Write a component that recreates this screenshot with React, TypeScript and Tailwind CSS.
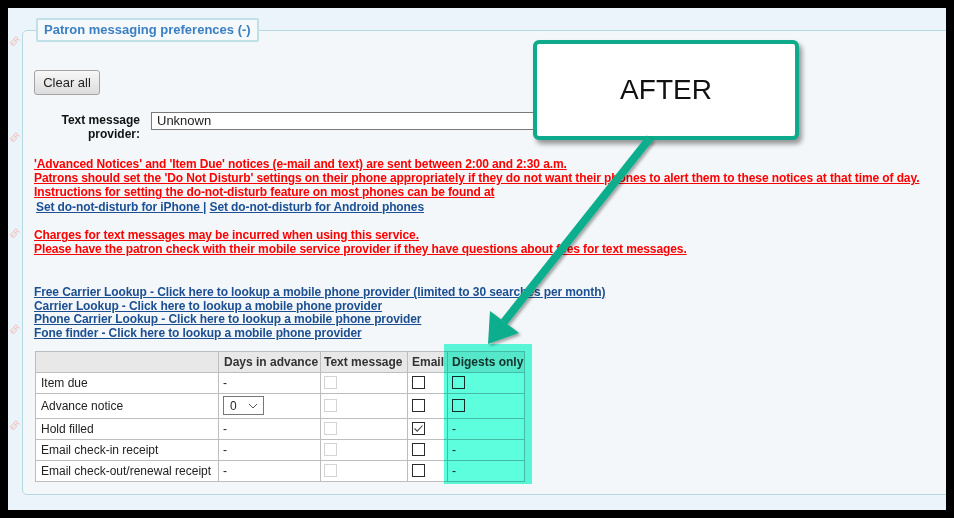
import React from "react";

type Row = {
  name: string;
  days: "-" | "select";
  emailChecked?: boolean;
  digest: "box" | "-";
  h: string;
};

const rows: Row[] = [
  { name: "Item due", days: "-", digest: "box", h: "h-[21px]" },
  { name: "Advance notice", days: "select", digest: "box", h: "h-[25px]" },
  { name: "Hold filled", days: "-", emailChecked: true, digest: "-", h: "h-[21px]" },
  { name: "Email check-in receipt", days: "-", digest: "-", h: "h-[21px]" },
  { name: "Email check-out/renewal receipt", days: "-", digest: "-", h: "h-[21px]" },
];

function Box({ disabled, checked }: { disabled?: boolean; checked?: boolean }) {
  return (
    <span
      className={`flex h-[13px] w-[13px] items-center justify-center border bg-white ${
        disabled ? "border-[#d4d4d4]" : "border-[#2b2b2b]"
      }`}
    >
      {checked && (
        <svg viewBox="0 0 11 11" className="h-[11px] w-[11px]">
          <path d="M1.5 5.5 L4.2 8.2 L9.5 2.5" fill="none" stroke="#444" strokeWidth="1.1" />
        </svg>
      )}
    </span>
  );
}

function Watermark() {
  return (
    <div className="flex w-[14px] shrink-0 flex-col overflow-hidden pt-[30px]">
      {[0, 1, 2, 3, 4].map((i) => (
        <div key={i} className="flex h-[96px] shrink-0 items-start justify-center">
          <span className="block -rotate-45 text-[8px] font-bold leading-none tracking-[-0.5px] text-[#f3c9c9]">
            ER
          </span>
        </div>
      ))}
    </div>
  );
}

export default function App() {
  return (
    <div className="h-[518px] w-[954px] bg-black p-2 font-['Liberation_Sans',Arial,sans-serif] text-[12px] text-[#222]">
      <div className="relative flex h-full w-full overflow-hidden bg-[#eaf4fa]">
        <Watermark />
        <fieldset className="mt-[10px] h-[477px] w-[940px] shrink-0 self-start rounded-[5px] border border-[#b3d9e1] bg-[#f4f7f9] pl-[11px]">
          <legend className="ml-[2px] flex h-[24px] items-center rounded-[2px] border-2 border-[#bfe0e6] bg-[#f6f9fb] px-[6px] text-[13px] font-bold text-[#3b7fc1]">
            Patron messaging preferences (-)
          </legend>

          <div className="mt-[28px]">
            <button className="flex h-[25px] w-[66px] items-center justify-center rounded-[3px] border border-[#a3a3a3] bg-gradient-to-b from-[#f7f7f7] to-[#dddddd] text-[13px] text-[#222]">
              Clear all
            </button>
          </div>

          <div className="mt-[17px] flex items-start">
            <div className="w-[106px] pt-px text-right text-[12px] font-bold leading-[14px] text-[#111]">
              Text message
              <br />
              provider:
            </div>
            <div className="ml-[11px] flex h-[18px] w-[420px] items-center border border-[#7a7a7a] bg-white pl-[5px] text-[13px] text-[#222]">
              Unknown
            </div>
          </div>

          <div className="mt-[16px] text-[12px] font-bold leading-[14px] tracking-[-0.1px] text-[#ff0000]">
            <div className="underline">
              'Advanced Notices' and 'Item Due' notices (e-mail and text) are sent between 2:00 and 2:30 a.m.
            </div>
            <div className="underline">
              Patrons should set the 'Do Not Disturb' settings on their phone appropriately if they do not want their
              phones to alert them to these notices at that time of day.
            </div>
            <div className="underline">
              Instructions for setting the do-not-disturb feature on most phones can be found at
            </div>
            <div className="pt-px pl-[2px] text-[#1c5096]">
              <span className="underline">Set do-not-disturb for iPhone |</span>{" "}
              <span className="underline">Set do-not-disturb for Android phones</span>
            </div>
            <div className="mt-[14px] underline">Charges for text messages may be incurred when using this service.</div>
            <div className="underline">
              Please have the patron check with their mobile service provider if they have questions about fees for
              text messages.
            </div>
          </div>

          <div className="mt-[30px] text-[12px] font-bold leading-[13.7px] tracking-[-0.1px] text-[#1c4f92]">
            <div className="underline">
              Free Carrier Lookup - Click here to lookup a mobile phone provider (limited to 30 searches per month)
            </div>
            <div className="underline">Carrier Lookup - Click here to lookup a mobile phone provider</div>
            <div className="underline">Phone Carrier Lookup - Click here to lookup a mobile phone provider</div>
            <div className="underline">Fone finder - Click here to lookup a mobile phone provider</div>
          </div>

          <div className="relative ml-px mt-[10px] w-[489px]">
            <table className="w-[489px] table-fixed border-collapse text-[12px] text-[#222]">
              <thead>
                <tr className="h-[21px] bg-[#e8e8e8] text-left whitespace-nowrap">
                  <th className="w-[183px] border border-[#bdbdbd] pl-[5px]"></th>
                  <th className="w-[102px] border border-[#bdbdbd] pl-[5px] font-bold text-[#333]">Days in advance</th>
                  <th className="w-[87px] border border-[#bdbdbd] pl-[3px] font-bold text-[#333]">Text message</th>
                  <th className="w-[40px] border border-[#bdbdbd] pl-[4px] font-bold text-[#333]">Email</th>
                  <th className="w-[77px] border border-[#bdbdbd] pl-[4px] font-bold text-[#333]">Digests only</th>
                </tr>
              </thead>
              <tbody>
                {rows.map((r) => (
                  <tr key={r.name} className={`${r.h} bg-white whitespace-nowrap`}>
                    <td className="border border-[#bdbdbd] pl-[5px]">{r.name}</td>
                    <td className="border border-[#bdbdbd] pl-[4px]">
                      {r.days === "-" ? (
                        "-"
                      ) : (
                        <div className="flex h-[19px] w-[41px] items-center justify-between border border-[#777] bg-white pl-[6px] pr-[5px]">
                          <span>0</span>
                          <svg viewBox="0 0 10 6" className="h-[6px] w-[10px]">
                            <path d="M1 1 L5 5 L9 1" fill="none" stroke="#555" strokeWidth="1" />
                          </svg>
                        </div>
                      )}
                    </td>
                    <td className="border border-[#bdbdbd] pl-[3px]">
                      <Box disabled />
                    </td>
                    <td className="border border-[#bdbdbd] pl-[4px]">
                      <Box checked={r.emailChecked} />
                    </td>
                    <td className="border border-[#bdbdbd] pl-[4px]">{r.digest === "box" ? <Box /> : "-"}</td>
                  </tr>
                ))}
              </tbody>
            </table>
            <div className="pointer-events-none absolute left-[409px] top-[-7px] h-[140px] w-[88px] bg-[#5cfedd] mix-blend-multiply"></div>
          </div>
        </fieldset>

        <div className="absolute left-[525px] top-[32px] flex h-[100px] w-[266px] items-center justify-center rounded-[6px] border-4 border-[#0dab8b] bg-white text-[28px] text-[#111] shadow-[3px_4px_5px_rgba(0,0,0,0.4)]">
          AFTER
        </div>

        <svg
          className="pointer-events-none absolute left-0 top-0"
          width="938"
          height="502"
          viewBox="8 8 938 502"
        >
          <defs>
            <filter id="sh" x="-20%" y="-20%" width="140%" height="140%">
              <feDropShadow dx="2" dy="2" stdDeviation="1.5" floodColor="#000" floodOpacity="0.35" />
            </filter>
          </defs>
          <g filter="url(#sh)" fill="#0fae8d" stroke="none">
            <line x1="650" y1="138" x2="504" y2="322" stroke="#0fae8d" strokeWidth="8" />
            <polygon points="488,344 490,311 519,333" />
          </g>
        </svg>
      </div>
    </div>
  );
}
